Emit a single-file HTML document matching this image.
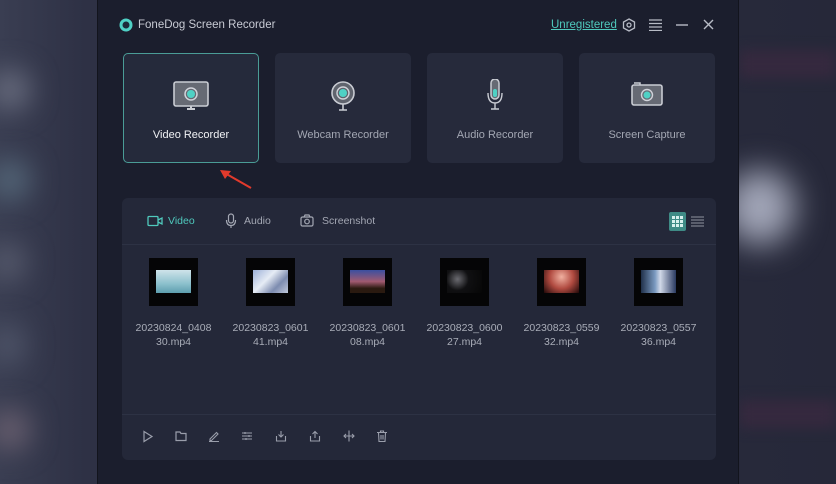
<!DOCTYPE html><html><head><style>
*{margin:0;padding:0;box-sizing:border-box}
body{width:836px;height:484px;overflow:hidden;position:relative;font-family:"Liberation Sans",sans-serif;
background:linear-gradient(90deg,#3a3e52 0%,#2e3145 10%,#262839 100%);}
.bl{position:absolute;border-radius:50%;filter:blur(14px)}
.win{position:absolute;left:97px;top:0;width:642px;height:484px;background:#1b1e2d;border-left:1px solid #12141d;border-right:1px solid #12141d}
.t{position:absolute;color:#c8cbd4;font-size:11px;white-space:nowrap}
.card{position:absolute;top:53px;width:136px;height:110px;background:#262a3b;border-radius:5px}
.card .lbl{position:absolute;top:76px;width:100%;text-align:center;color:#a3a7b3;font-size:11px}
.card svg{position:absolute;left:50%;top:26px;margin-left:-19px}
.panel{position:absolute;left:24px;top:198px;width:594px;height:262px;background:#242839;border-radius:6px}
.th{position:absolute;top:60px;width:49px;height:48px;background:#050506}
.th i{position:absolute;left:7px;top:12px;width:35px;height:23px;display:block}
.fn{position:absolute;top:123px;width:97px;text-align:center;color:#a9adb8;font-size:10.5px;line-height:14px}
.bi{position:absolute;top:232px}
</style></head><body>
<div class="bl" style="left:-10px;top:70px;width:40px;height:40px;background:#6a6e80"></div>
<div class="bl" style="left:-10px;top:160px;width:40px;height:40px;background:#55687a"></div>
<div class="bl" style="left:-10px;top:245px;width:35px;height:35px;background:#5a5e70"></div>
<div class="bl" style="left:-10px;top:325px;width:35px;height:40px;background:#50566a"></div>
<div class="bl" style="left:-10px;top:410px;width:40px;height:40px;background:#6a6070"></div>
<div style="position:absolute;left:739px;top:50px;width:97px;height:28px;background:#35293e;filter:blur(6px)"></div>
<div style="position:absolute;left:739px;top:400px;width:97px;height:28px;background:#35293e;filter:blur(6px)"></div>
<div class="bl" style="left:725px;top:170px;width:70px;height:75px;background:#a2a6b8;filter:blur(16px)"></div>
<div class="win">
 <svg style="position:absolute;left:21px;top:18px" width="14" height="14"><circle cx="7" cy="7" r="6.5" fill="#4fd1c5"/><circle cx="7" cy="7" r="3.5" fill="#1b2b3a"/></svg>
 <div class="t" style="left:40px;top:19px;font-size:11.5px">FoneDog Screen Recorder</div>
 <div class="t" style="left:453px;top:19px;color:#4fc9bd;text-decoration:underline;font-size:11.5px">Unregistered</div>
 <svg style="position:absolute;left:524px;top:18px" width="14" height="14"><polygon points="7,1 12.5,4 12.5,10 7,13 1.5,10 1.5,4" fill="none" stroke="#b8bcc6" stroke-width="1.3"/><circle cx="7" cy="7" r="2" fill="none" stroke="#b8bcc6" stroke-width="1.3"/></svg>
 <svg style="position:absolute;left:551px;top:19px" width="13" height="12"><path d="M0 1H13M0 4.5H13M0 8H13M0 11.5H13" stroke="#b8bcc6" stroke-width="1.2"/></svg>
 <svg style="position:absolute;left:578px;top:24px" width="12" height="2"><path d="M0 1H12" stroke="#b8bcc6" stroke-width="1.4"/></svg>
 <svg style="position:absolute;left:605px;top:19px" width="11" height="11"><path d="M1 1L10 10M10 1L1 10" stroke="#b8bcc6" stroke-width="1.4"/></svg>

 <div class="card" style="left:25px;border:1.5px solid #4a9c96;background:#252a3b"><svg width="38" height="32" viewBox="0 0 38 32"><rect x="2" y="2" width="34" height="24" rx="2" fill="#666a74" stroke="#c9ccd3" stroke-width="1.6"/><circle cx="19" cy="14" r="6" fill="none" stroke="#d0d3da" stroke-width="1.5"/><circle cx="19" cy="14" r="4" fill="#4fd1c5"/><path d="M15 29H23M19 26V29" stroke="#c9ccd3" stroke-width="2"/></svg><div class="lbl" style="color:#f0f1f4;top:75px">Video Recorder</div></div>
 <div class="card" style="left:177px"><svg width="38" height="34" viewBox="0 0 38 34"><circle cx="19" cy="14" r="11" fill="#60646e" stroke="#c9ccd3" stroke-width="1.6"/><circle cx="19" cy="14" r="6" fill="none" stroke="#d0d3da" stroke-width="1.4"/><circle cx="19" cy="14" r="4" fill="#4fd1c5"/><path d="M19 25V31M15 31H23" stroke="#c9ccd3" stroke-width="1.6"/></svg><div class="lbl">Webcam Recorder</div></div>
 <div class="card" style="left:329px"><svg width="38" height="34" viewBox="0 0 38 34"><rect x="15" y="0" width="8" height="20" rx="4" fill="#666a74" stroke="#c9ccd3" stroke-width="1.5"/><rect x="17" y="10" width="4" height="8" rx="2" fill="#4fd1c5"/><path d="M12 14Q12 24 19 24Q26 24 26 14M19 24V30M15 30H23" fill="none" stroke="#c9ccd3" stroke-width="1.4"/></svg><div class="lbl">Audio Recorder</div></div>
 <div class="card" style="left:481px"><svg width="38" height="32" viewBox="0 0 38 32"><path d="M6 4H12V6" fill="none" stroke="#c9ccd3" stroke-width="1.5"/><rect x="4" y="6" width="30" height="20" rx="2" fill="#666a74" stroke="#c9ccd3" stroke-width="1.6"/><circle cx="19" cy="16" r="5.5" fill="none" stroke="#d0d3da" stroke-width="1.4"/><circle cx="19" cy="16" r="3.5" fill="#4fd1c5"/></svg><div class="lbl">Screen Capture</div></div>

 <svg style="position:absolute;left:121px;top:168px" width="35" height="22"><path d="M32 20L4 4" stroke="#e23a2c" stroke-width="2"/><polygon points="1,2 12,3 6,11" fill="#e23a2c"/></svg>

 <div class="panel">
  <svg style="position:absolute;left:25px;top:17px" width="16" height="12"><rect x="1" y="1.5" width="10" height="9" rx="1" fill="none" stroke="#4fc9bd" stroke-width="1.3"/><path d="M11 5L15 3V9L11 7" fill="none" stroke="#4fc9bd" stroke-width="1.3"/></svg>
  <div class="t" style="left:46px;top:17px;color:#4fc9bd;font-size:10.5px">Video</div>
  <svg style="position:absolute;left:103px;top:15px" width="12" height="16"><rect x="3.5" y="1" width="5" height="9" rx="2.5" fill="none" stroke="#a3a7b3" stroke-width="1.2"/><path d="M1.5 7Q1.5 12.5 6 12.5Q10.5 12.5 10.5 7M6 12.5V15" fill="none" stroke="#a3a7b3" stroke-width="1.2"/></svg>
  <div class="t" style="left:122px;top:17px;color:#a3a7b3;font-size:10.5px">Audio</div>
  <svg style="position:absolute;left:178px;top:16px" width="14" height="13"><rect x="1" y="3" width="12" height="9" rx="1.5" fill="none" stroke="#a3a7b3" stroke-width="1.2"/><path d="M4 3L5 1H9L10 3" fill="none" stroke="#a3a7b3" stroke-width="1.2"/><circle cx="7" cy="7.5" r="2.3" fill="none" stroke="#a3a7b3" stroke-width="1.2"/></svg>
  <div class="t" style="left:200px;top:17px;color:#a3a7b3;font-size:10.5px">Screenshot</div>
  <div style="position:absolute;left:547px;top:14px;width:17px;height:19px;background:#3f8b86;border-radius:2px"></div>
  <svg style="position:absolute;left:550px;top:18px" width="11" height="11"><path d="M0 0h3v3h-3zM4 0h3v3h-3zM8 0h3v3h-3zM0 4h3v3h-3zM4 4h3v3h-3zM8 4h3v3h-3zM0 8h3v3h-3zM4 8h3v3h-3zM8 8h3v3h-3z" fill="#d8f0ee"/></svg>
  <svg style="position:absolute;left:569px;top:18px" width="13" height="11"><path d="M0 1H13M0 4H13M0 7H13M0 10H13" stroke="#8f93a0" stroke-width="1"/></svg>
  <div style="position:absolute;left:0;top:46px;width:594px;height:1px;background:#2d3244"></div>
  <div class="th" style="left:27px"><i style="background:linear-gradient(#cfe3ea,#8cc0cc 60%,#5e9eae)"></i></div>
  <div class="th" style="left:124px"><i style="background:linear-gradient(135deg,#9cb0d8,#e6ecf5 40%,#7d8cb0 70%,#c0c8da)"></i></div>
  <div class="th" style="left:221px"><i style="background:linear-gradient(#3b4fa0,#a05a70 50%,#2a1a10 80%)"></i></div>
  <div class="th" style="left:318px"><i style="background:radial-gradient(circle at 30% 40%,#6a6a70,#101012 40%,#060606)"></i></div>
  <div class="th" style="left:415px"><i style="background:radial-gradient(circle at 50% 30%,#f0b0a0,#b04a40 50%,#200808)"></i></div>
  <div class="th" style="left:512px"><i style="background:linear-gradient(90deg,#20304a,#7a9ac0 40%,#d0d8e8 55%,#2a3a60)"></i></div>
  <div class="fn" style="left:3px">20230824_0408<br>30.mp4</div>
  <div class="fn" style="left:100px">20230823_0601<br>41.mp4</div>
  <div class="fn" style="left:197px">20230823_0601<br>08.mp4</div>
  <div class="fn" style="left:294px">20230823_0600<br>27.mp4</div>
  <div class="fn" style="left:391px">20230823_0559<br>32.mp4</div>
  <div class="fn" style="left:488px">20230823_0557<br>36.mp4</div>
  <div style="position:absolute;left:0;top:216px;width:594px;height:1px;background:#2d3244"></div>
  <svg class="bi" style="left:20px" width="12" height="13"><path d="M2 1.5L10 6.5L2 11.5Z" fill="none" stroke="#9a9eab" stroke-width="1.2"/></svg>
  <svg class="bi" style="left:53px" width="12" height="12"><path d="M1 2H5L6 3.5H11V10.5H1Z" fill="none" stroke="#9a9eab" stroke-width="1.2"/></svg>
  <svg class="bi" style="left:86px" width="12" height="12"><path d="M2 9L8.5 2.5L10 4L3.5 10.5H2ZM1 11.5H11" fill="none" stroke="#9a9eab" stroke-width="1.1"/></svg>
  <svg class="bi" style="left:119px" width="12" height="12"><path d="M1 3H11M1 6H11M1 9H11M4 2V4M8 5V7M5 8V10" fill="none" stroke="#9a9eab" stroke-width="1.1"/></svg>
  <svg class="bi" style="left:153px" width="12" height="12"><path d="M6 1V7M3.5 4.5L6 7L8.5 4.5M1.5 6V11H10.5V6" fill="none" stroke="#9a9eab" stroke-width="1.1"/></svg>
  <svg class="bi" style="left:187px" width="12" height="12"><path d="M6 8V1.5M3.5 4L6 1.5L8.5 4M1.5 6V11H10.5V6" fill="none" stroke="#9a9eab" stroke-width="1.1"/></svg>
  <svg class="bi" style="left:221px" width="12" height="12"><path d="M6 0.5V11.5M1 6H11M3 4L1 6L3 8M9 4L11 6L9 8" fill="none" stroke="#9a9eab" stroke-width="1.1"/></svg>
  <svg class="bi" style="left:254px" width="12" height="12"><path d="M1 2.5H11M4.5 2.5V1H7.5V2.5M2.5 2.5L3 11.5H9L9.5 2.5M5 5V9.5M7 5V9.5" fill="none" stroke="#9a9eab" stroke-width="1.1"/></svg>
 </div>
</div>
</body></html>
